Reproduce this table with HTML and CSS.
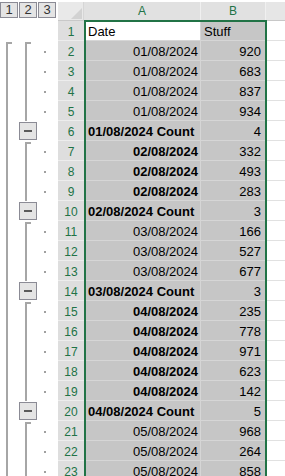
FILE: index.html
```html
<!DOCTYPE html>
<html>
<head>
<meta charset="utf-8">
<link rel="stylesheet" href="styles.css">
</head>
<body>
<div class="sheet">
  <div class="row hdr">
    <div class="btn">1</div><div class="btn">2</div><div class="btn">3</div>
    <div class="corner"><span class="tri"></span></div>
    <div class="ch">A</div><div class="ch">B</div><div class="ch chc"></div>
  </div>

  <div class="row"><div></div><div></div><div></div><div class="rh">1</div><div class="c a act">Date</div><div class="c b">Stuff</div><div class="cc"></div></div>

  <div class="row"><div><span class="l1 start"></span></div><div><span class="l2 start"></span></div><div><span class="dot"></span></div><div class="rh">2</div><div class="c a r">01/08/2024</div><div class="c b r">920</div><div class="cc"></div></div>
  <div class="row"><div><span class="l1"></span></div><div><span class="l2"></span></div><div><span class="dot"></span></div><div class="rh">3</div><div class="c a r">01/08/2024</div><div class="c b r">683</div><div class="cc"></div></div>
  <div class="row"><div><span class="l1"></span></div><div><span class="l2"></span></div><div><span class="dot"></span></div><div class="rh">4</div><div class="c a r">01/08/2024</div><div class="c b r">837</div><div class="cc"></div></div>
  <div class="row"><div><span class="l1"></span></div><div><span class="l2"></span></div><div><span class="dot"></span></div><div class="rh">5</div><div class="c a r">01/08/2024</div><div class="c b r">934</div><div class="cc"></div></div>
  <div class="row"><div><span class="l1"></span></div><div><span class="minus"><span class="bar"></span></span></div><div></div><div class="rh">6</div><div class="c a bold">01/08/2024 Count</div><div class="c b r">4</div><div class="cc"></div></div>

  <div class="row"><div><span class="l1"></span></div><div><span class="l2 start"></span></div><div><span class="dot"></span></div><div class="rh">7</div><div class="c a r bold">02/08/2024</div><div class="c b r">332</div><div class="cc"></div></div>
  <div class="row"><div><span class="l1"></span></div><div><span class="l2"></span></div><div><span class="dot"></span></div><div class="rh">8</div><div class="c a r bold">02/08/2024</div><div class="c b r">493</div><div class="cc"></div></div>
  <div class="row"><div><span class="l1"></span></div><div><span class="l2"></span></div><div><span class="dot"></span></div><div class="rh">9</div><div class="c a r bold">02/08/2024</div><div class="c b r">283</div><div class="cc"></div></div>
  <div class="row"><div><span class="l1"></span></div><div><span class="minus"><span class="bar"></span></span></div><div></div><div class="rh">10</div><div class="c a bold">02/08/2024 Count</div><div class="c b r">3</div><div class="cc"></div></div>

  <div class="row"><div><span class="l1"></span></div><div><span class="l2 start"></span></div><div><span class="dot"></span></div><div class="rh">11</div><div class="c a r">03/08/2024</div><div class="c b r">166</div><div class="cc"></div></div>
  <div class="row"><div><span class="l1"></span></div><div><span class="l2"></span></div><div><span class="dot"></span></div><div class="rh">12</div><div class="c a r">03/08/2024</div><div class="c b r">527</div><div class="cc"></div></div>
  <div class="row"><div><span class="l1"></span></div><div><span class="l2"></span></div><div><span class="dot"></span></div><div class="rh">13</div><div class="c a r">03/08/2024</div><div class="c b r">677</div><div class="cc"></div></div>
  <div class="row"><div><span class="l1"></span></div><div><span class="minus"><span class="bar"></span></span></div><div></div><div class="rh">14</div><div class="c a bold">03/08/2024 Count</div><div class="c b r">3</div><div class="cc"></div></div>

  <div class="row"><div><span class="l1"></span></div><div><span class="l2 start"></span></div><div><span class="dot"></span></div><div class="rh">15</div><div class="c a r bold">04/08/2024</div><div class="c b r">235</div><div class="cc"></div></div>
  <div class="row"><div><span class="l1"></span></div><div><span class="l2"></span></div><div><span class="dot"></span></div><div class="rh">16</div><div class="c a r bold">04/08/2024</div><div class="c b r">778</div><div class="cc"></div></div>
  <div class="row"><div><span class="l1"></span></div><div><span class="l2"></span></div><div><span class="dot"></span></div><div class="rh">17</div><div class="c a r bold">04/08/2024</div><div class="c b r">971</div><div class="cc"></div></div>
  <div class="row"><div><span class="l1"></span></div><div><span class="l2"></span></div><div><span class="dot"></span></div><div class="rh">18</div><div class="c a r bold">04/08/2024</div><div class="c b r">623</div><div class="cc"></div></div>
  <div class="row"><div><span class="l1"></span></div><div><span class="l2"></span></div><div><span class="dot"></span></div><div class="rh">19</div><div class="c a r bold">04/08/2024</div><div class="c b r">142</div><div class="cc"></div></div>
  <div class="row"><div><span class="l1"></span></div><div><span class="minus"><span class="bar"></span></span></div><div></div><div class="rh">20</div><div class="c a bold">04/08/2024 Count</div><div class="c b r">5</div><div class="cc"></div></div>

  <div class="row"><div><span class="l1"></span></div><div><span class="l2 start"></span></div><div><span class="dot"></span></div><div class="rh">21</div><div class="c a r">05/08/2024</div><div class="c b r">968</div><div class="cc"></div></div>
  <div class="row"><div><span class="l1"></span></div><div><span class="l2"></span></div><div><span class="dot"></span></div><div class="rh">22</div><div class="c a r">05/08/2024</div><div class="c b r">264</div><div class="cc"></div></div>
  <div class="row"><div><span class="l1"></span></div><div><span class="l2"></span></div><div><span class="dot"></span></div><div class="rh">23</div><div class="c a r">05/08/2024</div><div class="c b r">858</div><div class="cc"></div></div>

  <div class="sel"></div>
</div>
</body>
</html>
```
FILE: styles.css
```css
* { box-sizing: border-box; margin: 0; padding: 0; }
html, body { width: 285px; height: 476px; overflow: hidden; background: #fff; }
body { font-family: "Liberation Sans", Arial, sans-serif; font-size: 13px; color: #000; }

.sheet { position: relative; }

.row {
  display: grid;
  grid-template-columns: 19px 19px 20px 26px 117px 65px 1fr;
  height: 20px;
}
.hdr { height: 21px; }

/* outline level buttons */
.btn {
  width: 18px;
  height: 16px;
  margin-top: 2px;
  border: 1px solid #8b8b95;
  background: #e4e4e4;
  color: #333;
  font-size: 13px;
  line-height: 14px;
  text-align: center;
}

.corner {
  margin-top: 2px;
  background: #e9e9e9;
  border-right: 1px solid #d6d6d6;
  border-bottom: 1px solid #c8c8c8;
  display: flex;
  justify-content: flex-end;
  align-items: flex-end;
  padding: 0 1px 1px 0;
}
.tri {
  display: block;
  width: 11px;
  height: 11px;
  background: #d2d2d2;
  clip-path: polygon(100% 0, 100% 100%, 0 100%);
}

.ch {
  margin-top: 2px;
  background: #e1e1e1;
  border-right: 1px solid #f0f0f0;
  border-bottom: 1px solid #c8c8c8;
  color: #217346;
  font-size: 12px;
  line-height: 18px;
  text-align: center;
}
.chc { background: #e6e6e6; border-right: none; }

/* row headers */
.rh {
  background: #dedede;
  border-bottom: 1px solid #ededed;
  color: #217346;
  font-size: 12px;
  line-height: 23px;
  text-align: center;
  overflow: hidden;
}

/* cells */
.c {
  background: #c6c6c6;
  border-right: 1px solid #d6d6d6;
  border-bottom: 1px solid #d6d6d6;
  line-height: 22px;
  overflow: hidden;
  white-space: nowrap;
}
.a { padding: 0 2px 0 4px; }
.b { padding: 0 4px 0 3px; }
.r { text-align: right; }
.bold { font-weight: bold; }
.act { background: #fff; }
.cc { background: #fff; border-bottom: 1px solid #e1e1e1; }

/* outline symbols */
.l1, .l2 {
  display: block;
  margin-left: 6px;
  width: 2px;
  height: 20px;
  background: #a6a6a6;
}
.l1.start, .l2.start {
  margin-top: 1px;
  height: 19px;
  width: 6px;
  background: none;
  border-left: 2px solid #a6a6a6;
  border-top: 2px solid #a6a6a6;
}
.dot {
  display: block;
  width: 2px;
  height: 2px;
  margin: 10px 0 0 6px;
  background: #a0a0a0;
}
.minus {
  display: flex;
  align-items: center;
  justify-content: center;
  width: 18px;
  height: 18px;
  margin-top: 1px;
  border: 1px solid #8b8b95;
  background: #e4e4e4;
}
.bar {
  display: block;
  width: 8px;
  height: 2px;
  background: #5a5a5a;
}

/* selection frame over the range */
.sel {
  position: absolute;
  left: 84px;
  top: 20px;
  width: 183px;
  height: 480px;
  border: 2px solid #217346;
  pointer-events: none;
}
```
